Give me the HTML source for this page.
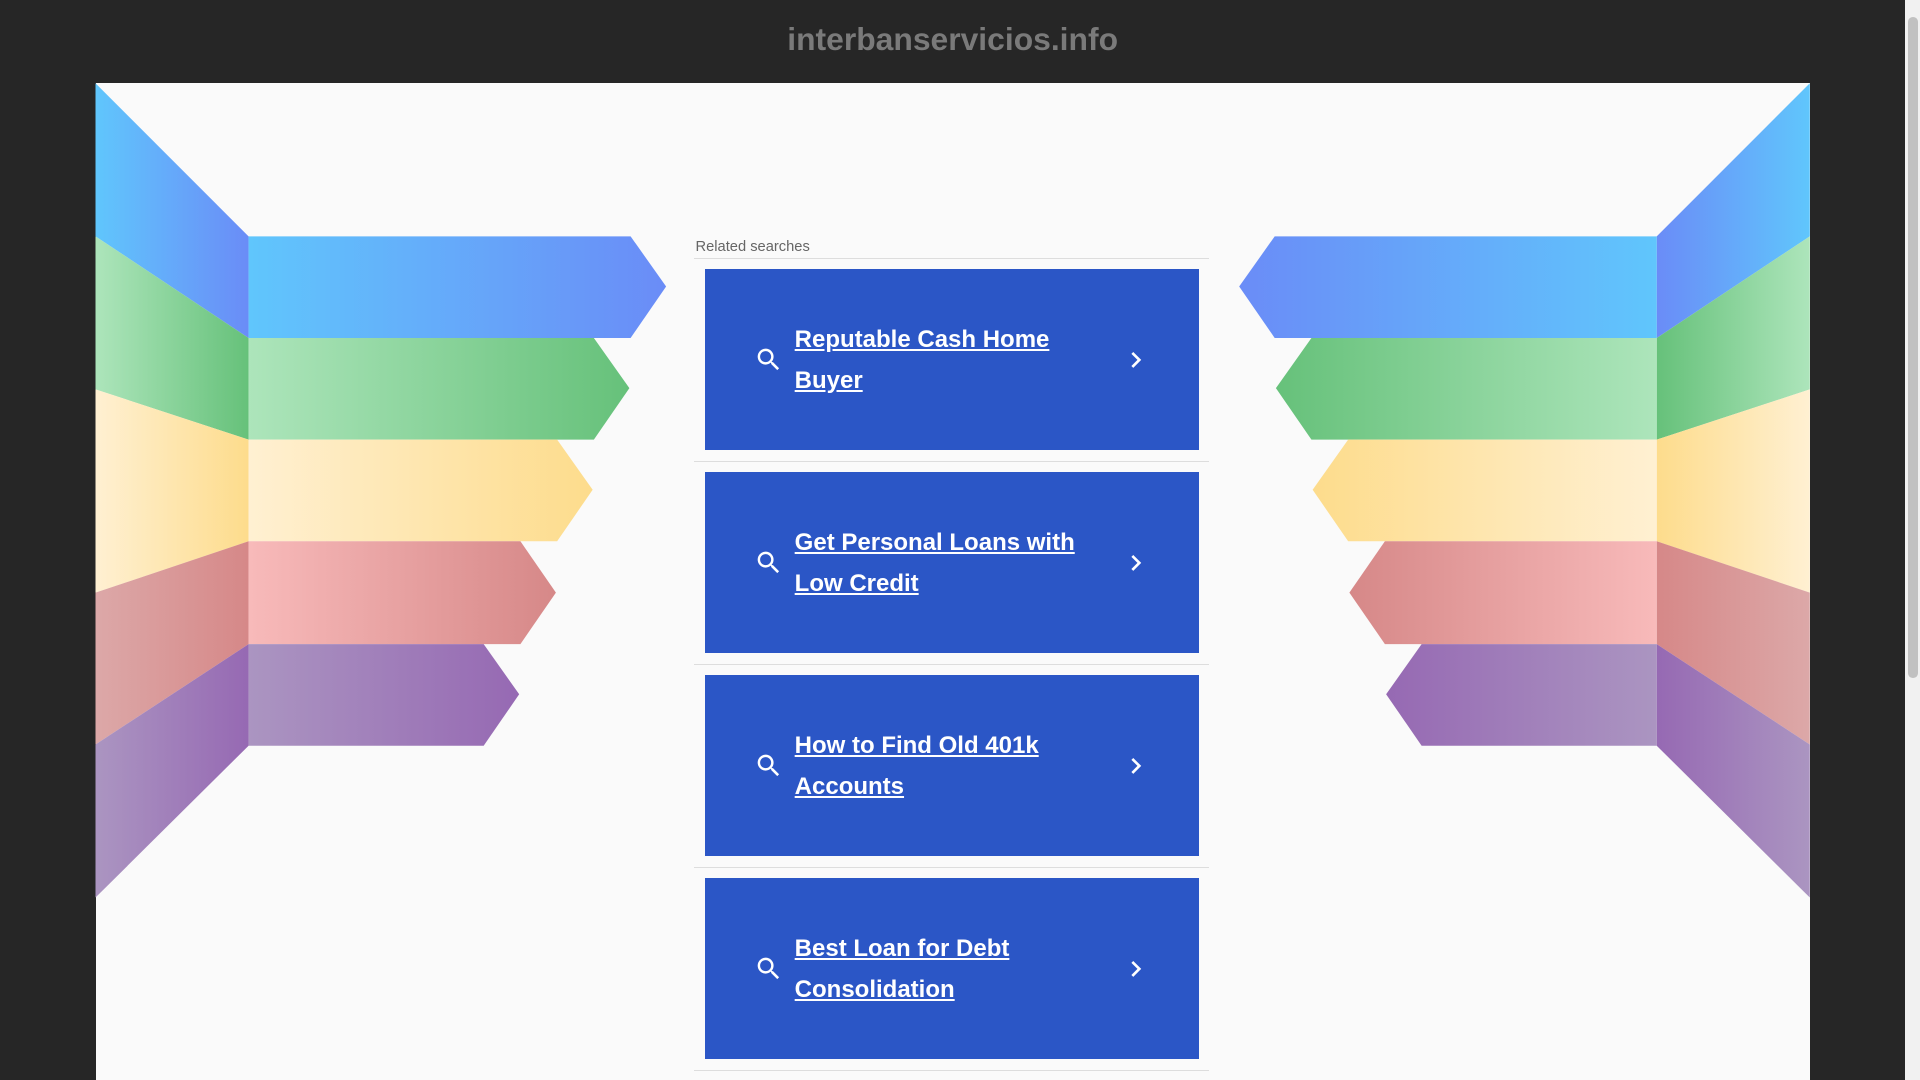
<!DOCTYPE html>
<html><head><meta charset="utf-8"><style>
html,body{margin:0;padding:0;overflow:hidden;background:#262626}
#w{zoom:1.22449;width:1568px;height:882px;position:relative;font-family:"Liberation Sans",Arial,sans-serif;background:#262626;overflow:hidden}
h1{position:absolute;left:0;width:1556px;top:17px;margin:0;text-align:center;color:#7a7a7a;font-size:26px;font-weight:bold}
#panel{position:absolute;left:78px;top:68px;width:1400px;height:820px;background:#fafafa}
svg{position:absolute;left:0;top:0}
#rs{position:absolute;left:567px;top:195px;width:420px;font-size:12px;color:#666}
.lbl{height:16px;border-bottom:1px solid #ddd;padding-left:1px}
.item{height:157px;border-bottom:1px solid #ddd;padding-top:8px}
.card{margin:0 8px 0 9px;height:148px;background:#2b56c6;position:relative}
.card a{position:absolute;left:73px;top:41px;width:240px;color:#fff;font-size:19.6px;font-weight:bold;line-height:33.5px;text-decoration:underline;text-underline-offset:2px}
.card .s{position:absolute;left:40px;top:62px}
.card .c{position:absolute;left:339px;top:61px}
#sb{position:absolute;left:1556px;top:0;width:12px;height:882px;background:#f1f1f1}
#sb div{position:absolute;left:2px;top:14px;width:8px;height:540px;background:#c1c1c1;border-radius:4px}
</style></head><body><div id="w">
<h1>interbanservicios.info</h1>
<div id="panel"></div>
<svg width="1556" height="882" viewBox="0 0 1556 882">
<defs>
<linearGradient id="b1" x1="0" x2="1"><stop offset="0" stop-color="#60c6fc"/><stop offset="1" stop-color="#6a8cf7"/></linearGradient>
<linearGradient id="g1" x1="0" x2="1"><stop offset="0" stop-color="#ade5bb"/><stop offset="1" stop-color="#66c17a"/></linearGradient>
<linearGradient id="y1" x1="0" x2="1"><stop offset="0" stop-color="#fff0d2"/><stop offset="1" stop-color="#fddc8c"/></linearGradient>
<linearGradient id="r1" x1="0" x2="1"><stop offset="0" stop-color="#f8baba"/><stop offset="1" stop-color="#d68888"/></linearGradient>
<linearGradient id="p1" x1="0" x2="1"><stop offset="0" stop-color="#ab95c1"/><stop offset="1" stop-color="#9669b3"/></linearGradient>
<linearGradient id="r3" x1="0" x2="1"><stop offset="0" stop-color="#dca8a8"/><stop offset="1" stop-color="#d68888"/></linearGradient>
</defs>
<g id="L">
<polygon points="78,68 203,193 203,276 78,193" fill="url(#b1)"/>
<polygon points="78,193 203,276 203,359 78,318" fill="url(#g1)"/>
<polygon points="78,318 203,359 203,442 78,484" fill="url(#y1)"/>
<polygon points="78,484 203,442 203,526 78,608" fill="url(#r3)"/>
<polygon points="78,608 203,526 203,609 78,733" fill="url(#p1)"/>
<polygon points="203,193 515,193 544,234 515,276 203,276" fill="url(#b1)"/>
<polygon points="203,276 485,276 514,317 485,359 203,359" fill="url(#g1)"/>
<polygon points="203,359 455,359 484,400 455,442 203,442" fill="url(#y1)"/>
<polygon points="203,442 425,442 454,484 425,526 203,526" fill="url(#r1)"/>
<polygon points="203,526 395,526 424,567 395,609 203,609" fill="url(#p1)"/>
</g>
<use href="#L" transform="translate(1556,0) scale(-1,1)"/>
</svg>
<div id="rs">
<div class="lbl">Related searches</div>
<div class="item"><div class="card"><svg class="s" width="24" height="24" viewBox="0 0 24 24"><path fill="#fff" d="M15.5 14h-.79l-.28-.27A6.47 6.47 0 0016 9.5 6.5 6.5 0 109.5 16c1.61 0 3.09-.59 4.23-1.570l.27.28v.79l5 4.99L20.49 19l-4.99-5zm-6 0C7.01 14 5 11.99 5 9.5S7.01 5 9.5 5 14 7.01 14 9.5 11.99 14 9.5 14z"/></svg><a>Reputable Cash Home Buyer</a><svg class="c" width="26" height="26" viewBox="0 0 24 24"><path fill="#fff" d="M10 6L8.59 7.41 13.17 12l-4.58 4.59L10 18l6-6z"/></svg></div></div>
<div class="item"><div class="card"><svg class="s" width="24" height="24" viewBox="0 0 24 24"><path fill="#fff" d="M15.5 14h-.79l-.28-.27A6.47 6.47 0 0016 9.5 6.5 6.5 0 109.5 16c1.61 0 3.09-.59 4.23-1.57l.27.28v.79l5 4.99L20.49 19l-4.99-5zm-6 0C7.01 14 5 11.99 5 9.5S7.01 5 9.5 5 14 7.01 14 9.5 11.99 14 9.5 14z"/></svg><a>Get Personal Loans with Low Credit</a><svg class="c" width="26" height="26" viewBox="0 0 24 24"><path fill="#fff" d="M10 6L8.59 7.41 13.17 12l-4.58 4.59L10 18l6-6z"/></svg></div></div>
<div class="item"><div class="card"><svg class="s" width="24" height="24" viewBox="0 0 24 24"><path fill="#fff" d="M15.5 14h-.79l-.28-.27A6.47 6.47 0 0016 9.5 6.5 6.5 0 109.5 16c1.61 0 3.09-.59 4.23-1.57l.27.28v.79l5 4.99L20.49 19l-4.99-5zm-6 0C7.01 14 5 11.99 5 9.5S7.01 5 9.5 5 14 7.01 14 9.5 11.99 14 9.5 14z"/></svg><a>How to Find Old 401k Accounts</a><svg class="c" width="26" height="26" viewBox="0 0 24 24"><path fill="#fff" d="M10 6L8.59 7.41 13.17 12l-4.58 4.59L10 18l6-6z"/></svg></div></div>
<div class="item"><div class="card"><svg class="s" width="24" height="24" viewBox="0 0 24 24"><path fill="#fff" d="M15.5 14h-.79l-.28-.27A6.47 6.47 0 0016 9.5 6.5 6.5 0 109.5 16c1.61 0 3.09-.59 4.23-1.57l.27.28v.79l5 4.99L20.49 19l-4.99-5zm-6 0C7.01 14 5 11.99 5 9.5S7.01 5 9.5 5 14 7.01 14 9.5 11.99 14 9.5 14z"/></svg><a>Best Loan for Debt Consolidation</a><svg class="c" width="26" height="26" viewBox="0 0 24 24"><path fill="#fff" d="M10 6L8.59 7.41 13.17 12l-4.58 4.59L10 18l6-6z"/></svg></div></div>
</div>
<div id="sb"><div></div></div>
</div></body></html>
